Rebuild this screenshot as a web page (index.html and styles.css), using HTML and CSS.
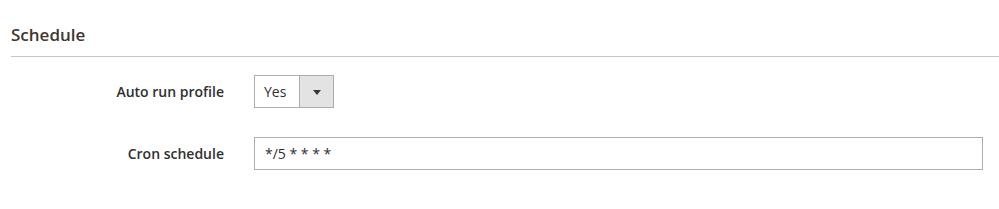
FILE: index.html
```html
<!DOCTYPE html>
<html lang="en">

<head>
    <meta charset="UTF-8">
    <title>Schedule</title>
    <link rel="stylesheet" href="styles.css">
</head>

<body>
    <div class="section">
        <div class="section-title">Schedule</div>

        <div class="field field-first">
            <label class="label" for="auto_run">Auto run profile</label>
            <div class="control">
                <div class="select" id="auto_run">
                    <span class="select-value">Yes</span>
                    <span class="select-arrow"></span>
                </div>
            </div>
        </div>

        <div class="field">
            <label class="label" for="cron">Cron schedule</label>
            <div class="control">
                <input type="text" class="input" id="cron" value="*/5 * * * *">
            </div>
        </div>
    </div>
</body>

</html>
```

FILE: styles.css
```css
* {
    margin: 0;
    padding: 0;
    box-sizing: border-box;
}

body {
    background-color: #fff;
    font-family: "Open Sans", "Liberation Sans", sans-serif;
    color: #303030;
    font-size: 14px;
}

.section {
    padding: 23px 0 0 11px;
}

.section-title {
    font-size: 17px;
    font-weight: 600;
    color: #41362f;
    line-height: 24px;
    padding-bottom: 9px;
    border-bottom: 1px solid #cdc5bd;
}

.field {
    display: flex;
    align-items: center;
    margin-right: 16px;
}

.field-first {
    margin-top: 18px;
}

.field + .field {
    margin-top: 29px;
}

.label {
    width: 213px;
    text-align: right;
    font-weight: 600;
    color: #303030;
    padding-right: 30px;
    box-sizing: content-box;
}

.control {
    flex: 1;
}

.select {
    display: flex;
    width: 80px;
    height: 33px;
    border: 1px solid #adadad;
    background-color: #fff;
}

.select-value {
    flex: 1;
    line-height: 31px;
    padding-left: 9px;
}

.select-arrow {
    width: 34px;
    border-left: 1px solid #adadad;
    background-color: #e3e3e3;
    position: relative;
}

.select-arrow::after {
    content: "";
    position: absolute;
    left: 13px;
    top: 14px;
    border-left: 4px solid transparent;
    border-right: 4px solid transparent;
    border-top: 5px solid #41362f;
}

.input {
    width: 100%;
    height: 33px;
    border: 1px solid #adadad;
    font-family: inherit;
    font-size: 14px;
    color: #303030;
    padding: 0 10px;
    outline: none;
}
```
